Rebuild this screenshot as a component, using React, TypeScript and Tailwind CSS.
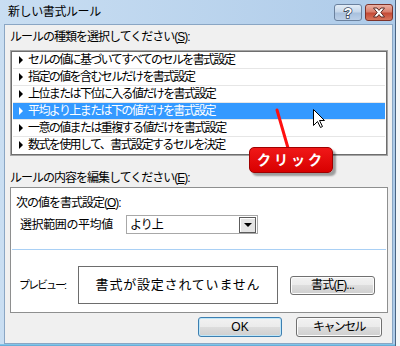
import React from "react"

const rules = [
  "セルの値に基づいてすべてのセルを書式設定",
  "指定の値を含むセルだけを書式設定",
  "上位または下位に入る値だけを書式設定",
  "平均より上または下の値だけを書式設定",
  "一意の値または重複する値だけを書式設定",
  "数式を使用して、書式設定するセルを決定",
]

function VistaButton({ children, isDefault = false, className = "" }: { children: React.ReactNode; isDefault?: boolean; className?: string }) {
  return (
    <div
      className={`flex items-center justify-center rounded-[3px] border text-[12px] ${
        isDefault ? "border-[#3c7fb1] shadow-[inset_0_0_0_1px_#bfe6f8]" : "border-[#707070] shadow-[inset_0_0_0_1px_#fcfcfc]"
      } bg-[linear-gradient(#f2f2f2_0%,#ebebeb_49%,#dddddd_50%,#cfcfcf_100%)] ${className}`}
    >
      {children}
    </div>
  )
}

export default function App() {
  return (
    <div className="relative h-[346px] w-[400px] overflow-hidden bg-[#f4f6f8] font-['Liberation_Sans','Noto_Sans_CJK_JP',sans-serif] text-black">
      <div className="flex h-[346px] w-[396px] flex-col border-r border-[#4a6482] bg-[linear-gradient(90deg,#c9def2,#aecbe9)]">
        {/* title bar */}
        <div className="flex h-[24px] shrink-0 items-start justify-between pl-[8px] pr-[2px]">
          <div className="pt-[4px] text-[12px] leading-[16px] tracking-[-0.4px]">新しい書式ルール</div>
          <div className="flex gap-[3px] pt-[4px]">
            <div className="flex h-[17px] w-[28px] items-center justify-center rounded-[3px] border border-[#6a819e] bg-[linear-gradient(#e3edf7_0%,#c6d7ea_45%,#a9c1dd_55%,#bcd0e8_100%)]">
              <svg width="12" height="14" viewBox="0 0 12 14">
                <text x="6" y="12" textAnchor="middle" fontFamily="Liberation Sans" fontWeight="bold" fontSize="14" fill="#ffffff" stroke="#3c4a5c" strokeWidth="1.6" paintOrder="stroke">?</text>
              </svg>
            </div>
            <div className="flex h-[17px] w-[28px] items-center justify-center rounded-[3px] border border-[#7d3229] bg-[linear-gradient(#eab1a4_0%,#d9806e_45%,#c44a36_55%,#d8755c_100%)]">
              <svg width="14" height="11" viewBox="0 0 14 11">
                <path d="M1.5 1 H5 L7 3.4 L9 1 H12.5 L8.8 5.5 L12.5 10 H9 L7 7.6 L5 10 H1.5 L5.2 5.5 Z" fill="#ffffff" stroke="#5a2a24" strokeWidth="1" strokeLinejoin="round" />
              </svg>
            </div>
          </div>
        </div>

        {/* body */}
        <div className="ml-[4px] mr-[2px] flex flex-1 flex-col border border-[#8aa6c4] bg-[#f0f0f0] pl-[5px] pr-[4px] pt-[5px]">
          <div className="text-[12px] leading-[14px] tracking-[-1px]">
            ルールの種類を選択してください(<span className="underline">S</span>):
          </div>

          <div className="mt-[6px] border border-[#a5a5a5] bg-white">
            <div className="border border-[#6e6e6e] px-[1px]">
              {rules.map((r, i) => {
                const sel = i === 3
                return (
                  <div
                    key={r}
                    className={`flex h-[17px] items-center border-b ${i === 5 ? "border-transparent" : "border-[#e6e6e6]"} ${
                      sel ? "bg-[#3399ff] text-white" : ""
                    }`}
                  >
                    <span className={`ml-[6px] mr-[5px] h-0 w-0 border-y-[4px] border-l-[4px] border-y-transparent ${sel ? "border-l-white" : "border-l-black"}`} />
                    <span className="text-[12px] leading-[14px] tracking-[-1.6px]">{r}</span>
                  </div>
                )
              })}
            </div>
          </div>

          <div className="mt-[15px] text-[12px] leading-[14px] tracking-[-1px]">
            ルールの内容を編集してください(<span className="underline">E</span>):
          </div>

          <div className="mt-[2px] flex h-[126px] flex-col border border-[#8e8f8f] bg-white">
            <div className="pl-[5px] pt-[8px] text-[12px] leading-[14px] tracking-[-1px]">
              次の値を書式設定(<span className="underline">O</span>):
            </div>
            <div className="mt-[5px] flex items-center pl-[9px]">
              <div className="w-[106px] text-[12px] leading-[14px] tracking-[-0.4px]">選択範囲の平均値</div>
              <div className="flex h-[19px] w-[132px] items-center justify-between border border-[#a8a8a8] pl-[3px] pr-[1px]">
                <span className="text-[12px] leading-[14px] tracking-[-1px]">より上</span>
                <div className="flex h-[16px] w-[17px] items-center justify-center border border-[#5c5c5c] bg-[#e4e4e4] shadow-[inset_1px_1px_0_#ffffff]">
                  <span className="h-0 w-0 border-x-[4px] border-t-[4px] border-x-transparent border-t-black" />
                </div>
              </div>
            </div>
            <div className="mx-[1px] mt-[15px] h-px bg-[#a9d0f5]" />
            <div className="mt-[16px] flex items-center pl-[8px]">
              <div className="w-[59px] text-[11px] leading-[14px] tracking-[-2px]">プレビュー:</div>
              <div className="flex h-[38px] w-[200px] items-center justify-center border border-[#6d6d6d] text-[13px] tracking-[0.8px]">
                書式が設定されていません
              </div>
              <VistaButton className="ml-[12px] h-[19px] w-[85px] tracking-[-0.8px]">
                書式(<span className="underline">F</span>)...
              </VistaButton>
            </div>
          </div>

          <div className="mt-[4px] flex justify-end gap-[14px] pr-[6px]">
            <VistaButton isDefault className="h-[20px] w-[84px]">OK</VistaButton>
            <VistaButton className="h-[20px] w-[86px] text-[11px] tracking-[-1.6px]">キャンセル</VistaButton>
          </div>
          <div className="h-[6px]" />
        </div>
        <div className="h-[4px] shrink-0 border-b border-[#1b2c3c] bg-[linear-gradient(#8fd0f0,#3f8cc0)]" />
      </div>

      {/* annotation overlay */}
      <svg className="absolute left-0 top-0" width="400" height="346">
        <line x1="277" y1="110" x2="288" y2="148" stroke="#ff1010" strokeWidth="3" strokeLinecap="round" />
      </svg>
      <div className="absolute left-[249px] top-[147px] flex h-[26px] w-[84px] items-center justify-center rounded-[5px] border border-[#a00000] bg-[linear-gradient(#f01818,#d80000)] shadow-[3px_3px_2px_rgba(0,0,0,0.35)]">
        <span className="text-[14px] font-bold leading-[16px] tracking-[3px] text-white">クリック</span>
      </div>
      <svg className="absolute left-[313px] top-[109px]" width="13" height="20" viewBox="0 0 13 20">
        <path d="M0.5 0.5 V16.5 L4.5 12.5 L7.5 18.5 L9.5 17.5 L6.5 11.5 H11.5 Z" fill="#ffffff" stroke="#000000" strokeWidth="1" strokeLinejoin="miter" />
      </svg>
    </div>
  )
}
